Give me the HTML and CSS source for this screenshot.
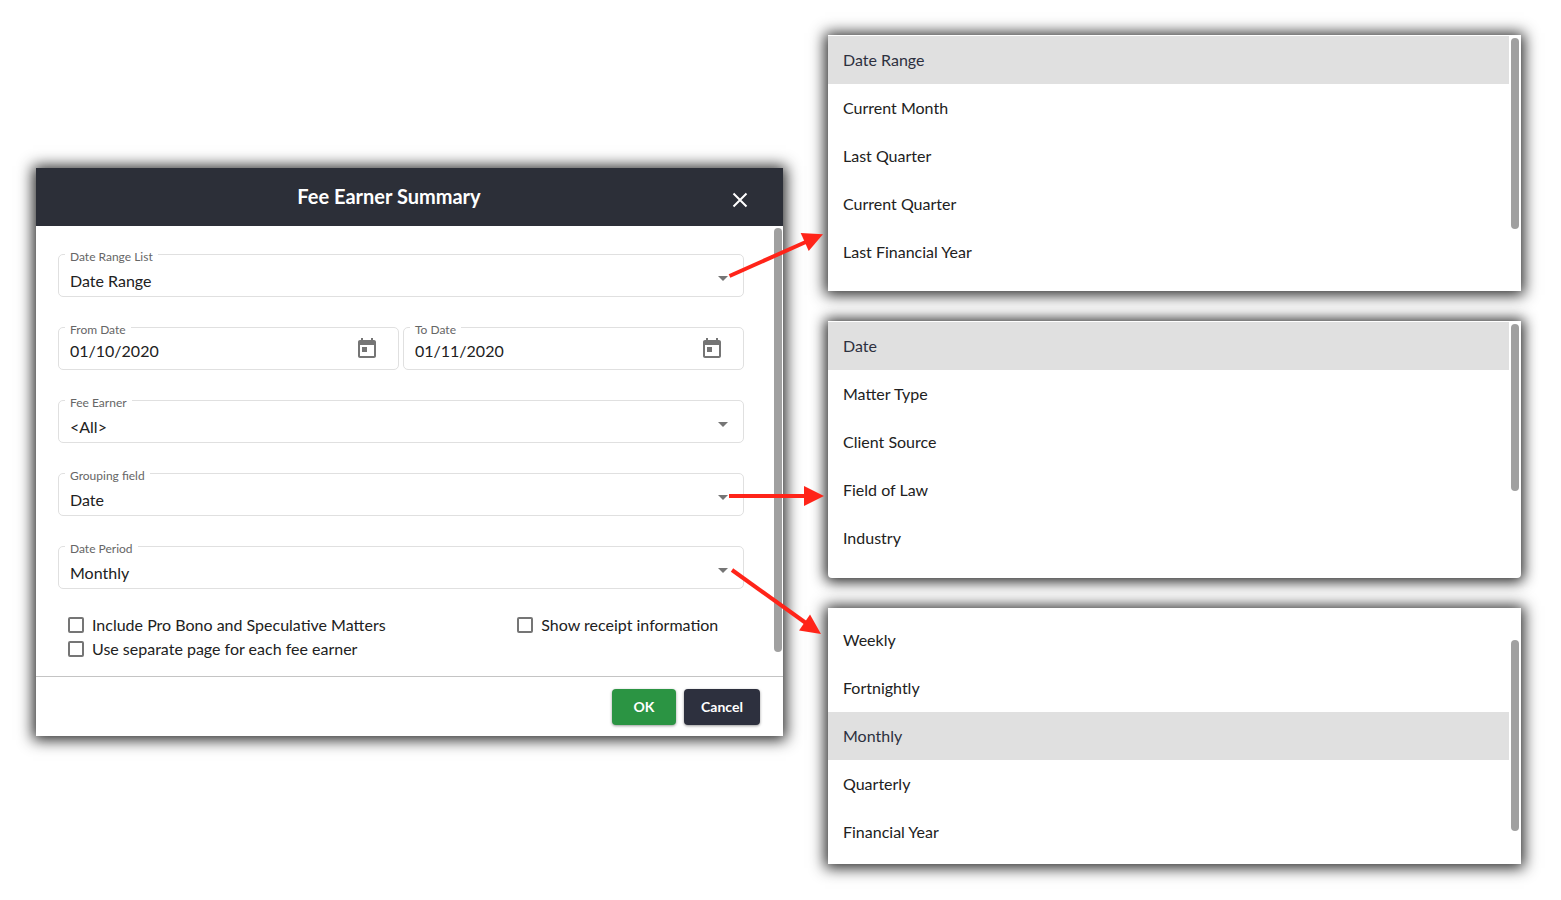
FILE: index.html
```
<!DOCTYPE html>
<html lang="en">
<head>
    <meta charset="UTF-8">
    <meta name="viewport" content="width=device-width, initial-scale=1.0">
    <title>Fee Earner Summary</title>
    <link rel="stylesheet" href="styles.css">
</head>
<body>
    <main class="page">
        <section class="dialog" role="dialog" aria-labelledby="dialogTitle">
            <header class="dialog-header">
                <h1 id="dialogTitle">Fee Earner Summary</h1>
                <button type="button" class="close" aria-label="Close">
                    <svg viewBox="0 0 24 24" width="24" height="24"><path d="M5.5 5.5l13 13M18.5 5.5l-13 13" fill="none" stroke="#fff" stroke-width="2"/></svg>
                </button>
            </header>

            <form id="reportForm" class="dialog-body">
                <div class="fields">
                    <div class="field">
                        <label for="dateRange">Date Range List</label>
                        <select id="dateRange"><option>Date Range</option></select>
                    </div>
                    <div class="field-row">
                        <div class="field date">
                            <label for="fromDate">From Date</label>
                            <input type="text" id="fromDate" value="01/10/2020">
                            <button type="button" class="calendar" aria-label="Pick from date">
                                <svg viewBox="0 0 24 24" width="24" height="24"><path fill="#757575" d="M19 3h-1V1h-2v2H8V1H6v2H5c-1.11 0-1.99.9-1.99 2L3 19c0 1.1.89 2 2 2h14c1.1 0 2-.9 2-2V5c0-1.1-.9-2-2-2zm0 16H5V8h14v11zM7 10h5v5H7z"/></svg>
                            </button>
                        </div>
                        <div class="field date">
                            <label for="toDate">To Date</label>
                            <input type="text" id="toDate" value="01/11/2020">
                            <button type="button" class="calendar" aria-label="Pick to date">
                                <svg viewBox="0 0 24 24" width="24" height="24"><path fill="#757575" d="M19 3h-1V1h-2v2H8V1H6v2H5c-1.11 0-1.99.9-1.99 2L3 19c0 1.1.89 2 2 2h14c1.1 0 2-.9 2-2V5c0-1.1-.9-2-2-2zm0 16H5V8h14v11zM7 10h5v5H7z"/></svg>
                            </button>
                        </div>
                    </div>
                    <div class="field">
                        <label for="feeEarner">Fee Earner</label>
                        <select id="feeEarner"><option>&lt;All&gt;</option></select>
                    </div>
                    <div class="field">
                        <label for="grouping">Grouping field</label>
                        <select id="grouping"><option>Date</option></select>
                    </div>
                    <div class="field">
                        <label for="datePeriod">Date Period</label>
                        <select id="datePeriod"><option>Monthly</option></select>
                    </div>
                    <div class="checks">
                        <label><input type="checkbox"> Include Pro Bono and Speculative Matters</label>
                        <label><input type="checkbox"> Show receipt information</label>
                        <label><input type="checkbox"> Use separate page for each fee earner</label>
                    </div>
                </div>
                <div class="scrollbar"><div class="thumb"></div></div>
            </form>

            <footer class="dialog-footer">
                <button type="submit" form="reportForm" class="btn btn-ok">OK</button>
                <button type="button" class="btn btn-cancel">Cancel</button>
            </footer>
        </section>

        <div class="menus">
            <div class="menu">
                <ul role="listbox" aria-label="Date Range List">
                    <li role="option" aria-selected="true" class="selected">Date Range</li>
                    <li role="option">Current Month</li>
                    <li role="option">Last Quarter</li>
                    <li role="option">Current Quarter</li>
                    <li role="option">Last Financial Year</li>
                </ul>
                <div class="scrollbar"><div class="thumb"></div></div>
            </div>
            <div class="menu menu-grouping">
                <ul role="listbox" aria-label="Grouping field">
                    <li role="option" aria-selected="true" class="selected">Date</li>
                    <li role="option">Matter Type</li>
                    <li role="option">Client Source</li>
                    <li role="option">Field of Law</li>
                    <li role="option">Industry</li>
                </ul>
                <div class="scrollbar"><div class="thumb"></div></div>
            </div>
            <div class="menu menu-period">
                <ul role="listbox" aria-label="Date Period">
                    <li role="option">Weekly</li>
                    <li role="option">Fortnightly</li>
                    <li role="option" aria-selected="true" class="selected">Monthly</li>
                    <li role="option">Quarterly</li>
                    <li role="option">Financial Year</li>
                </ul>
                <div class="scrollbar"><div class="thumb"></div></div>
            </div>
        </div>

        <!-- arrows from each drop-down to its menu -->
        <svg class="arrows" viewBox="0 0 1561 900" preserveAspectRatio="none" aria-hidden="true">
            <g stroke="#ff2419" stroke-width="4">
                <path d="M729.5 276L808 241"/>
                <path d="M729 496H808"/>
                <path d="M732 570L808 624.500"/>
            </g>
            <g fill="#ff2419">
                <path d="M823 234.300L800.700 233L808.700 251z"/>
                <path d="M824 496L804 486V506z"/>
                <path d="M821 634L810 614.500L799 630.500z"/>
            </g>
        </svg>
    </main>
</body>
</html>
```
FILE: styles.css
```
* {
    box-sizing: border-box;
}
body {
    margin: 0;
    background-color: #fff;
    color: #212121;
    font-family: Lato, "Open Sans", sans-serif;
    font-size: 16px;
    line-height: 24px;
}
button, input, select {
    margin: 0;
    padding: 0;
    border: none;
    background: none;
    color: inherit;
    font: inherit;
}
button {
    cursor: pointer;
}
svg {
    display: block;
}
.page {
    position: relative;
    display: grid;
    grid-template-columns: 747fr 693fr;
    gap: 45px;
    align-items: start;
    padding: 35px 40px 36px 36px;
}
.dialog, .menu {
    background-color: #fff;
    box-shadow: 0 1px 14px 3px rgba(0, 0, 0, 0.85);
}

/* Dialog */
.dialog {
    margin-top: 133px;
}
.dialog-header {
    display: flex;
    align-items: flex-start;
    padding: 16px 31px 18px 14px;
    background-color: #2c2f38;
    color: #fff;
}
.dialog-header h1 {
    flex: 1;
    margin: 0;
    font-size: 20px;
    line-height: 24px;
    font-weight: bold;
    text-align: center;
}
.close {
    margin-top: 4px;
    margin-bottom: -4px;
}
.dialog-body {
    display: flex;
}
.fields {
    flex: 1;
    display: flex;
    flex-direction: column;
    gap: 30px;
    padding: 28px 29px 15px 22px;
}
.field-row {
    display: flex;
    gap: 4px;
}
.field {
    position: relative;
    flex: 1;
    display: flex;
    border: 1px solid #e0e0e0;
    border-radius: 5px;
}
.field label {
    position: absolute;
    top: -6px;
    left: 6px;
    padding: 0 5px;
    background-color: #fff;
    color: #666;
    font-size: 12px;
    line-height: 16px;
}
.field select, .field input {
    flex: 1;
    min-width: 0;
    height: 41px;
    padding-left: 11px;
}
.field select {
    appearance: none;
    padding-top: 10px;
}
.field input {
    padding-top: 4px;
}
.field:not(.date)::after {
    content: "";
    align-self: center;
    margin-top: 6px;
    margin-right: 15px;
    border: 5px solid transparent;
    border-top-color: #757575;
    border-bottom: none;
}
.calendar {
    align-self: center;
    margin-right: 19px;
}
.checks {
    display: grid;
    grid-template-columns: 2fr 1fr;
    margin-top: -6px;
    padding: 0 2px 0 10px;
}
.checks label {
    display: flex;
    align-items: center;
    gap: 8px;
    white-space: nowrap;
}
.checks input {
    appearance: none;
    width: 16px;
    height: 16px;
    border: 2px solid #757575;
    border-radius: 2px;
}
.dialog-footer {
    display: flex;
    justify-content: flex-end;
    gap: 8px;
    padding: 12px 23px 11px;
    border-top: 1px solid #c4c4c4;
}
.btn {
    min-width: 64px;
    padding: 0 15px;
    border-radius: 4px;
    box-shadow: 0 1px 3px rgba(0, 0, 0, 0.4);
    color: #fff;
    font-size: 14px;
    line-height: 36px;
    font-weight: bold;
}
.btn-ok {
    background-color: #2b9443;
}
.btn-cancel {
    min-width: 76px;
    background-color: #2d303e;
}

/* Scrollbars */
.scrollbar {
    padding: 3px 2px 0;
}
.thumb {
    width: 8px;
    height: 191px;
    border-radius: 4px;
    background-color: #a0a0a0;
}
.dialog .scrollbar {
    padding: 2px 1px 0;
}
.dialog .thumb {
    height: 424px;
}

/* Open menus */
.menus {
    display: flex;
    flex-direction: column;
    gap: 30px;
}
.menu {
    display: flex;
}
.menu ul {
    flex: 1;
    margin: 0;
    padding: 1px 0 15px;
    list-style: none;
}
.menu li {
    padding: 12px 15px;
}
.menu .selected {
    background-color: #e0e0e0;
    color: #2d303e;
}
.menu-grouping {
    border-radius: 0 0 4px 4px;
}
.menu-grouping ul {
    padding-bottom: 16px;
}
.menu-grouping .thumb {
    height: 167px;
}
.menu-period ul {
    padding: 8px 0;
}
.menu-period .scrollbar {
    padding-top: 32px;
}
.arrows {
    position: absolute;
    top: 0;
    left: 0;
    width: 100%;
    height: 900px;
    pointer-events: none;
}
```
